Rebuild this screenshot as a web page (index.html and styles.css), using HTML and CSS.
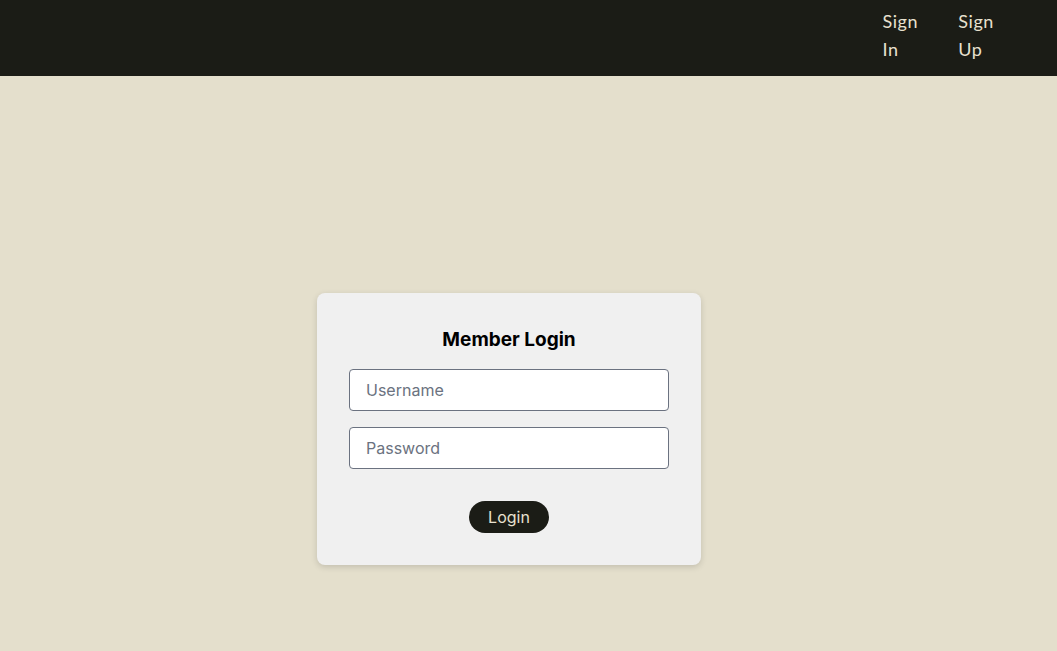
FILE: index.html
```html
<!DOCTYPE html>
<html lang="en">
<head>
<meta charset="utf-8">
<title>Member Login</title>
<link rel="stylesheet" href="styles.css">
</head>
<body>
<header class="topbar">
  <nav class="nav">
    <a class="nav-link" href="#">Sign In</a>
    <a class="nav-link" href="#">Sign Up</a>
  </nav>
</header>
<main class="main">
  <form class="card">
    <h1 class="card-title">Member Login</h1>
    <input class="field" type="text" placeholder="Username">
    <input class="field" type="password" placeholder="Password">
    <button class="btn" type="button">Login</button>
  </form>
</main>
</body>
</html>
```
FILE: styles.css
```css
* { box-sizing: border-box; }
html, body { margin: 0; padding: 0; }
body {
  background: #e4dfcc;
  font-family: Inter, "Liberation Sans", sans-serif;
  min-height: 100vh;
}
.topbar {
  background: #1b1c16;
  height: 76px;
  display: flex;
  justify-content: flex-end;
  padding: 7px 63px 0 0;
}
.nav {
  display: flex;
  gap: 40px;
}
.nav-link {
  width: min-content;
  color: #e8e1cf;
  text-decoration: none;
  font-family: Lato, "Liberation Sans", sans-serif;
  font-size: 18px;
  line-height: 28px;
  letter-spacing: 0.6px;
}
.main {
  display: flex;
  justify-content: center;
  padding: 217px 39px 0 0;
}
.card {
  width: 384px;
  background: #f0f0f0;
  border-radius: 8px;
  box-shadow: 0 2px 6px rgba(0,0,0,0.15);
  padding: 32px;
  display: flex;
  flex-direction: column;
  align-items: center;
}
.card-title {
  margin: 1px 0 15px;
  font-size: 19px;
  line-height: 28px;
  font-weight: 700;
  color: #000;
}
.field {
  width: 320px;
  height: 42px;
  border: 1px solid #6b7280;
  border-radius: 4px;
  background: #fff;
  padding: 0 16px;
  font-family: Inter, "Liberation Sans", sans-serif;
  font-size: 16px;
  color: #111;
  margin-bottom: 16px;
}
.field::placeholder { color: #6b7280; }
.btn {
  margin-top: 16px;
  height: 32px;
  padding: 0 19px;
  border: 0;
  border-radius: 999px;
  background: #1b1c16;
  color: #e8e1cf;
  font-family: Inter, "Liberation Sans", sans-serif;
  font-size: 16px;
}
```
